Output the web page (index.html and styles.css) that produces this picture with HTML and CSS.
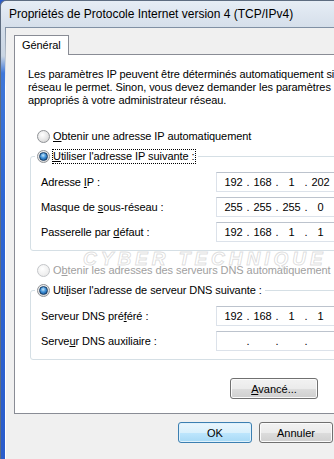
FILE: index.html
```html
<!DOCTYPE html>
<html lang="fr">
<head>
  <meta charset="UTF-8" />
  <title>Propriétés de Protocole Internet version 4 (TCP/IPv4)</title>
  <link rel="stylesheet" href="styles.css">
</head>
<body>
  <div class="window">
    <div class="titlebar">Propriétés de Protocole Internet version 4 (TCP/IPv4)</div>

    <div class="client">
      <div class="tabs">
        <div class="tab">Général</div>
      </div>

      <div class="panel">
        <p class="intro">Les paramètres IP peuvent être déterminés automatiquement si votre<br>réseau le permet. Sinon, vous devez demander les paramètres IP<br>appropriés à votre administrateur réseau.</p>

        <div class="option first">
          <span class="radio"></span>
          <span><u>O</u>btenir une adresse IP automatiquement</span>
        </div>

        <fieldset class="group">
          <legend class="option">
            <span class="radio on"></span>
            <span class="focus"><u>U</u>tiliser l'adresse IP suivante :</span>
          </legend>
          <div class="fields">
            <span>Adresse <u>I</u>P :</span>
            <span class="ipbox">
              <span class="oct">192</span><span class="dot">.</span><span class="oct">168</span><span class="dot">.</span><span class="oct">1</span><span class="dot">.</span><span class="oct">202</span>
            </span>
            <span>Masque de <u>s</u>ous-réseau :</span>
            <span class="ipbox">
              <span class="oct">255</span><span class="dot">.</span><span class="oct">255</span><span class="dot">.</span><span class="oct">255</span><span class="dot">.</span><span class="oct">0</span>
            </span>
            <span>Passerelle par <u>d</u>éfaut :</span>
            <span class="ipbox">
              <span class="oct">192</span><span class="dot">.</span><span class="oct">168</span><span class="dot">.</span><span class="oct">1</span><span class="dot">.</span><span class="oct">1</span>
            </span>
          </div>
        </fieldset>

        <div class="option dns-auto disabled">
          <span class="radio"></span>
          <span>O<u>b</u>tenir les adresses des serveurs DNS automatiquement</span>
        </div>

        <fieldset class="group">
          <legend class="option">
            <span class="radio on"></span>
            <span>Uti<u>l</u>iser l'adresse de serveur DNS suivante :</span>
          </legend>
          <div class="fields">
            <span>Serveur DNS pré<u>f</u>éré :</span>
            <span class="ipbox">
              <span class="oct">192</span><span class="dot">.</span><span class="oct">168</span><span class="dot">.</span><span class="oct">1</span><span class="dot">.</span><span class="oct">1</span>
            </span>
            <span>Serve<u>u</u>r DNS auxiliaire :</span>
            <span class="ipbox">
              <span class="oct"></span><span class="dot">.</span><span class="oct"></span><span class="dot">.</span><span class="oct"></span><span class="dot">.</span><span class="oct"></span>
            </span>
          </div>
        </fieldset>

        <div class="advanced">
          <button class="btn wide"><u>A</u>vancé...</button>
        </div>

        <span class="watermark">CYBER TECHNIQUE</span>
      </div>

      <div class="actions">
        <button class="btn ok">OK</button>
        <button class="btn">Annuler</button>
      </div>
    </div>
  </div>
</body>
</html>
```

FILE: styles.css
```css
* { box-sizing: border-box; }

body {
  margin: 0;
  width: 334px;
  height: 459px;
  overflow: hidden;
  background: #2a5ccb;
  font-family: "Liberation Sans", Arial, sans-serif;
  font-size: 11px;
  letter-spacing: -0.07px;
  color: #000;
}

.window {
  width: 380px;
  height: 470px;
  padding: 0 0 8px 4px;
  border-left: 1px solid #5d6c80;
  border-top: 1px solid #5d6c80;
  border-top-left-radius: 6px;
  background: linear-gradient(to bottom,
    #e6edf5 0,
    #d3dde9 30px,
    #c9d5e3 55px,
    #3f77d8 72px,
    #2e66d3 200px,
    #2a5ccb 100%);
  display: flex;
  flex-direction: column;
}

.titlebar {
  height: 26px;
  line-height: 26px;
  padding-left: 4px;
  font-size: 12px;
  letter-spacing: 0;
  white-space: nowrap;
}

.client {
  flex: 1;
  padding: 7px 8px 0;
  background: #f0f0f0;
  border: 1px solid;
  border-right: 0;
  border-image: linear-gradient(to bottom, #7f8fa3, #ffffff 60px) 1;
}

/* tab strip */
.tabs { display: flex; }

.tab {
  height: 20px;
  line-height: 18px;
  padding: 0 7px;
  background: #fff;
  border: 1px solid #898c95;
  border-bottom: 0;
  margin-bottom: -1px;
  position: relative;
  z-index: 1;
}

.panel {
  position: relative;
  height: 360px;
  padding: 13px 12px 0 13px;
  background: #fff;
  border: 1px solid #898c95;
}

.intro {
  margin: 0;
  line-height: 13px;
  white-space: nowrap;
}

/* radio buttons */
.option {
  display: flex;
  align-items: center;
  gap: 3px;
  height: 13px;
  line-height: 13px;
  white-space: nowrap;
}

.option.first { margin: 23px 0 0 9px; }
.option.dns-auto { margin: 13px 0 0 9px; }
.option.disabled { color: #a0a0a0; }

.radio {
  width: 13px;
  height: 13px;
  flex: none;
  border-radius: 50%;
  border: 1px solid #8f9296;
  background: radial-gradient(circle at 40% 35%, #ffffff 0, #e6e6e6 55%, #c9c9c9 100%);
  display: inline-flex;
  align-items: center;
  justify-content: center;
}

.disabled .radio {
  border-color: #c4c6c9;
  background: radial-gradient(circle at 40% 35%, #ffffff 0, #f0f0f0 60%, #e2e2e2 100%);
}

.radio.on::after {
  content: '';
  width: 7px;
  height: 7px;
  border-radius: 50%;
  border: 1px solid #173b63;
  background: radial-gradient(circle at 45% 35%, #c3e6fb 0, #3d8fd6 45%, #0b4383 100%);
}

.focus { outline: 1px dotted #000; }

/* group boxes */
.group {
  margin: 7px 4px 0 2px;
  padding: 9px 8px 8px 10px;
  border: 1px solid #d5dfe5;
  border-radius: 3px;
}

.group legend {
  margin-left: -6px;
  padding: 0 3px 0 2px;
}

.fields {
  display: grid;
  grid-template-columns: 175px 130px;
  row-gap: 5px;
  align-items: center;
  white-space: nowrap;
}

.ipbox {
  height: 20px;
  display: flex;
  align-items: center;
  padding-left: 6px;
  background: #fff;
  border: 1px solid #dce2ea;
  border-top-color: #bcc3cd;
}

.oct {
  width: 21px;
  text-align: center;
}

.dot {
  width: 8px;
  text-align: center;
}

/* buttons */
.btn {
  height: 21px;
  width: 74px;
  padding: 0;
  font-family: inherit;
  font-size: 11px;
  color: #000;
  border: 1px solid #707070;
  border-radius: 3px;
  background: linear-gradient(to bottom, #f2f2f2 0, #ebebeb 50%, #dddddd 50%, #cfcfcf 100%);
  box-shadow: inset 0 0 0 1px #fbfbfb;
}

.btn.wide { width: 88px; }

.btn.ok {
  border-color: #3c7fb1;
  background: linear-gradient(to bottom, #eaf6fd 0, #d9f0fc 50%, #bee6fd 50%, #a7d9f5 100%);
  box-shadow: inset 0 0 0 1px #dff1fc;
}

.advanced {
  display: flex;
  margin-top: 18px;
  padding-left: 202px;
}

.actions {
  display: flex;
  gap: 7px;
  margin-top: 8px;
  padding-left: 164px;
}

.watermark {
  position: absolute;
  left: 68px;
  top: 193px;
  font-size: 19px;
  font-weight: bold;
  font-style: italic;
  letter-spacing: 4px;
  color: rgba(255, 255, 255, 0.6);
  -webkit-text-stroke: 1px rgba(160, 160, 160, 0.35);
  white-space: nowrap;
  pointer-events: none;
}
```
